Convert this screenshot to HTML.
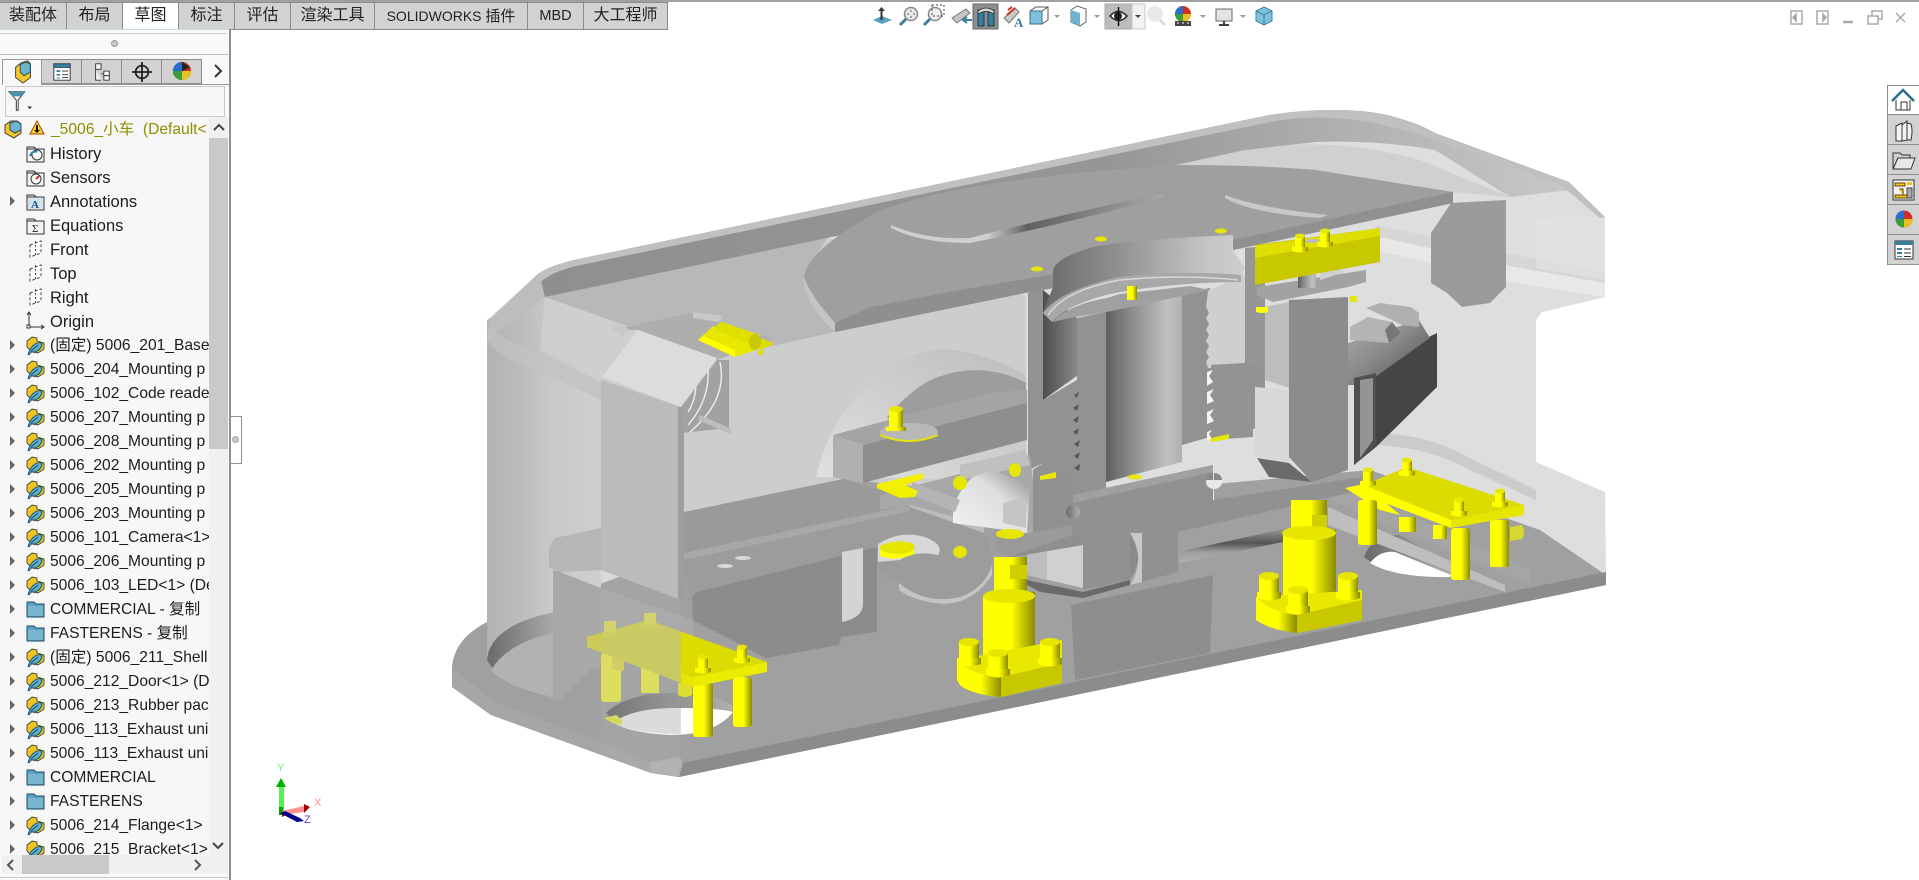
<!DOCTYPE html>
<html><head><meta charset="utf-8"><title>SOLIDWORKS</title>
<style>
html,body{margin:0;padding:0;background:#fff;width:1919px;height:880px;overflow:hidden;font-family:"Liberation Sans","Noto Sans CJK SC",sans-serif}
#topline{position:absolute;left:0;top:0;width:1919px;height:2px;background:#a0a0a0}
.tab{position:absolute;top:2px;height:26px;background:#d2d2d2;border:1px solid #8c8c8c;border-left:0;box-sizing:content-box;font-size:16px;line-height:26px;text-align:center;color:#222;font-family:"Liberation Sans","Noto Sans CJK SC",sans-serif;white-space:nowrap}
.tab.on{background:#fff;border-bottom:1px solid #fff}
#panel{position:absolute;left:0;top:29px;width:229px;height:851px;background:#f9f9f9;border-right:2px solid #8f8f8f;overflow:hidden}
#tree{position:absolute;left:0;top:117px;width:209px;height:738px;background:#f7f7f7;overflow:hidden}
.r{position:absolute;left:0;width:209px;height:24px;font-size:15.6px;line-height:24px;color:#1c1c1c;white-space:nowrap;overflow:hidden}
.r span{position:absolute;left:50px;top:1px}
.r.w{font-size:16.5px}
.r svg{position:absolute;left:26px;top:2px}
.r i{position:absolute;left:10px;top:7px;width:0;height:0;border-left:5px solid #666;border-top:5px solid transparent;border-bottom:5px solid transparent}
svg{display:block}
.abs{position:absolute}
</style></head><body>

<div id="topline"></div>
<div class="tab" style="left:0;width:66px">装配体</div>
<div class="tab" style="left:67px;width:55px">布局</div>
<div class="tab on" style="left:123px;width:55px">草图</div>
<div class="tab" style="left:179px;width:55px">标注</div>
<div class="tab" style="left:235px;width:55px">评估</div>
<div class="tab" style="left:291px;width:83px">渲染工具</div>
<div class="tab" style="left:375px;width:152px;font-size:14px">SOLIDWORKS <span style="font-size:15px">插件</span></div>
<div class="tab" style="left:528px;width:55px;font-size:14.5px">MBD</div>
<div class="tab" style="left:584px;width:83px">大工程师</div>

<!-- 3D MODEL -->
<svg class="abs" style="left:0;top:0" width="1919" height="880" viewBox="0 0 1919 880">
<defs>
<linearGradient id="gShaft" x1="0" x2="1" y1="0" y2="0"><stop offset="0" stop-color="#5f5f5f"/><stop offset=".35" stop-color="#8e8e8e"/><stop offset=".8" stop-color="#c0c0c0"/><stop offset="1" stop-color="#b0b0b0"/></linearGradient>
<linearGradient id="gRing" x1="0" x2="1" y1="0" y2="0"><stop offset="0" stop-color="#6a6a6a"/><stop offset=".35" stop-color="#8e8e8e"/><stop offset=".8" stop-color="#c4c4c4"/><stop offset="1" stop-color="#cfcfcf"/></linearGradient>
<linearGradient id="gHole" x1="0" x2="1" y1="0" y2="0"><stop offset="0" stop-color="#4e4e4e"/><stop offset="1" stop-color="#8e8e8e"/></linearGradient>
<linearGradient id="gShell" x1="0" x2="1" y1="0" y2="0"><stop offset="0" stop-color="#b2b2b2"/><stop offset=".3" stop-color="#bcbcbc"/><stop offset=".55" stop-color="#c9c9c9"/><stop offset="1" stop-color="#cfcfcf"/></linearGradient>
<linearGradient id="gY" x1="0" x2="1" y1="0" y2="0"><stop offset="0" stop-color="#ffff00"/><stop offset=".55" stop-color="#ffff00"/><stop offset="1" stop-color="#8a8a00"/></linearGradient>
<linearGradient id="gDisc" x1="0" x2="1" y1="1" y2="0"><stop offset="0" stop-color="#e0e0e0"/><stop offset="1" stop-color="#bcbcbc"/></linearGradient>
<linearGradient id="gMotor" x1="0" x2="1" y1="1" y2="0"><stop offset="0" stop-color="#f2f2f2"/><stop offset=".6" stop-color="#dedede"/><stop offset="1" stop-color="#8a8a8a"/></linearGradient>
<linearGradient id="gRod" x1="0" x2="0" y1="0" y2="1"><stop offset="0" stop-color="#a0a0a0"/><stop offset=".45" stop-color="#555"/><stop offset=".7" stop-color="#a0a0a0"/><stop offset="1" stop-color="#b0b0b0"/></linearGradient>
<linearGradient id="gBH" x1="0" x2="1" y1="0" y2="0"><stop offset="0" stop-color="#6a6a6a"/><stop offset="1" stop-color="#b0b0b0"/></linearGradient>
<linearGradient id="gBand" x1="0" x2="1" y1="0" y2="0"><stop offset="0" stop-color="#8f8f8f"/><stop offset=".55" stop-color="#969696"/><stop offset=".8" stop-color="#b2b2b2"/><stop offset="1" stop-color="#c8c8c8"/></linearGradient>
<linearGradient id="gSlot" x1="0" x2="1" y1="0" y2="0"><stop offset="0" stop-color="#d0d0d0"/><stop offset=".35" stop-color="#d0d0d0"/><stop offset=".5" stop-color="#606060"/><stop offset="1" stop-color="#a8a8a8"/></linearGradient>
<linearGradient id="gWedge" x1="0" x2="1" y1="0" y2="1"><stop offset="0" stop-color="#ababab"/><stop offset=".45" stop-color="#8a8a8a"/><stop offset="1" stop-color="#484848"/></linearGradient>
<g id="screw"><rect x="-5" y="-7" width="10" height="12" fill="url(#gY)"/><ellipse cx="0" cy="-7" rx="5" ry="2.400" fill="#e8e800"/><path d="M-8,4 h16 v4 q-8,3 -16,0z" fill="url(#gY)"/></g>
<g id="bigscrew"><path d="M-10,-12 h20 v18 h-20z" fill="url(#gY)"/><ellipse cx="0" cy="-12" rx="10" ry="4" fill="#e6e600"/><path d="M-12,4 h24 v6 q-12,5 -24,0z" fill="url(#gY)"/></g>
</defs>

<!-- shell full silhouette light -->
<path d="M487,320 L539,273 Q552,265 574,260 L1269,115 Q1300,110 1336,110 Q1370,110 1395,117 Q1420,124 1435,133 L1569,182 L1605,217 L1605,297 L1542,312 Q1536,314 1536,320 L1536,462 L1605,492 L1606,585 L1000,710 L679,777 L651,773 L491,715 L452,687 L452,667 Q456,620 543,605 Z" fill="#dedede"/>
<!-- mid wall grey -->
<path d="M545,297 L827,238 L1040,300 L1040,500 L684,515 L684,435 L545,400 Z" fill="#cdcdcd"/>
<path d="M545,297 L827,238 L804,277 L835,332 L717,358 L638,330 Z" fill="#b8b8b8"/>
<!-- right interior light shading -->
<path d="M1176,165 L1245,150 Q1316,142 1380,145 Q1410,148 1435,160 L1510,197 L1575,190 L1605,217 L1605,297 L1542,312 L1536,320 L1536,462 L1440,425 L1240,420 Z" fill="#dedede"/>
<path d="M1176,165 L1245,150 Q1330,135 1420,160 L1510,197 L1453,192 L1316,170Z" fill="#d0d0d0"/>
<path d="M1376,236 L1510,266 L1605,283 L1605,297 L1510,282 L1376,250Z" fill="#e8e8e8"/>
<path d="M1376,225 L1510,254 L1605,272 L1605,283 L1510,266 L1376,236Z" fill="#d6d6d6"/>
<path d="M1536,218 L1605,217 L1605,280 L1536,268Z" fill="#e2e2e2" opacity=".6"/>
<!-- outer top strip + band -->
<path d="M540,282 Q552,265 574,260 L1269,115 Q1300,110 1336,110 Q1370,110 1395,117 Q1420,124 1435,133 L1569,182 L1570,190 L1510,197 L1435,150 Q1380,140 1316,142 L1245,150 L1176,165 L827,238 L545,297 Z" fill="url(#gBand)"/>
<path d="M489,320 L539,273 Q552,265 574,260 L1269,115 Q1336,104 1395,117 L1435,133 L1569,182 L1605,217 L1600,218 L1562,186 L1430,138 Q1340,108 1270,122 L576,266 Q552,272 542,281 L495,325Z" fill="#c0c0c0"/>
<!-- lower right shell -->
<path d="M1395,420 Q1430,425 1470,445 L1605,492 L1606,575 L1534,587 L1328,507 L1340,470Z" fill="#dedede"/>
<path d="M1378,433 Q1430,435 1470,458 L1536,490 L1536,500 L1470,470 Q1430,448 1378,445Z" fill="#cbcbcb"/>
<!-- upper right block -->
<path d="M1431,233 L1451,203 L1506,200 L1506,287 L1490,303 L1462,307 L1447,293 L1431,283Z" fill="#9b9b9b"/>
<!-- big disc -->
<path d="M816,477 Q830,415 880,375 Q920,345 955,350 Q990,355 1025,375 L1040,480 Z" fill="url(#gDisc)"/>
<path d="M887,417 Q915,385 938,377 Q985,360 1030,385 L1030,420 L900,430 Z" fill="#9d9d9d"/>
<!-- base plate -->
<path d="M452,667 Q456,620 543,605 L684,553 L843,479 L1040,500 L1370,470 L1540,530 L1606,575 L1606,585 L679,777 L651,773 L491,715 L452,687Z" fill="#a0a0a0"/>
<path d="M452,667 L452,687 L491,715 L651,773 L651,762 L491,700Z" fill="#a6a6a6"/>
<path d="M683,763 L1606,572 L1606,585 L679,777Z" fill="#8c8c8c"/>
<path d="M651,762 L680,757 L683,763 L679,777 L651,773Z" fill="#b0b0b0"/>
<!-- back slab -->
<path d="M684,512 L843,479 L910,500 L910,507 L684,553Z" fill="#9a9a9a"/>
<!-- translucent left column -->
<path d="M487,320 L545,297 L602,377 L601,570 L601,600 L555,612 Q505,625 487,660Z" fill="url(#gShell)"/>
<path d="M489,320 L539,273 L545,297 L487,340Z" fill="#bdbdbd"/>
<path d="M545,297 L638,330 L602,377 L540,350Z" fill="#cfcfcf"/>
<path d="M487,340 Q495,355 540,372 L601,400 L601,382 L545,355 Q500,340 489,325Z" fill="#c2c2c2" opacity=".7"/>
<!-- left recess in base -->
<path d="M487,660 Q490,625 555,612 L560,700 Q505,690 487,660Z" fill="url(#gBH)"/>
<path d="M491,670 Q510,640 560,632 L560,698 Q510,690 491,670Z" fill="#b2b2b2"/>
<!-- bracket -->
<path d="M549,547 L555,538 L684,510 L684,553 L601,570 L560,572 L549,567Z" fill="#b6b6b6"/>
<path d="M560,572 L601,588 L693,620 L693,650 L640,660 L590,670 L560,700 L553,698 L553,570Z" fill="#a8a8a8"/>
<path d="M684,553 L910,507 L984,533 L990,540 L992,573 Q970,600 946,600 Q915,600 899,583 L877,570 L877,632 L841,637 L839,643 L766,658 L693,618 L692,597 L684,575Z" fill="#9c9c9c"/>
<path d="M692,597 L697,592 L877,547 L877,632 L841,637 L839,645 L766,658 L693,620Z" fill="#8c8c8c"/>
<path d="M842,552 L863,548 L863,605 Q862,618 842,622Z" fill="#d4d4d4"/>
<path d="M910,500 L984,523 L984,533 L910,507Z" fill="#bcbcbc"/>
<path d="M684,553 L910,505 L910,511 L684,560Z" fill="#a8a8a8"/>
<ellipse cx="725" cy="566" rx="8" ry="2" fill="#d8d8d8"/><ellipse cx="743" cy="558" rx="8" ry="2" fill="#d8d8d8"/>
<path d="M878,544 Q900,530 925,537 Q945,545 938,555 Q915,550 900,560 L878,562Z" fill="#d8d8d8"/>
<path d="M899,583 Q925,605 960,597 Q985,588 992,565 L992,575 Q975,602 945,604 Q915,602 899,590Z" fill="#c4c4c4"/>
<!-- block on base -->
<path d="M1071,605 L1213,575 L1210,653 L1075,680Z" fill="#8e8e8e"/>
<!-- holes in base right -->
<path d="M1364,557 Q1372,535 1400,535 L1451,565 L1451,577 Q1390,578 1364,557Z" fill="url(#gBH)"/>
<path d="M1370,563 Q1380,550 1395,552 L1451,575 L1450,577 Q1395,578 1370,563Z" fill="#fff"/>
<path d="M1328,507 L1505,585 L1505,592 L1328,525Z" fill="#bebebe"/>
<path d="M1330,480 L1530,570 L1530,585 L1330,500Z" fill="#a8a8a8" opacity=".6"/>
<!-- left hole -->
<path d="M606,713 Q625,695 665,693 Q720,693 733,707 Q730,730 670,735 Q625,733 606,713Z" fill="url(#gBH)"/>
<path d="M614,723 Q630,708 680,708 Q720,708 733,712 Q715,735 670,735 Q630,733 614,723Z" fill="#fff"/>
<path d="M614,723 Q630,708 681,708 L681,734 Q630,733 614,723Z" fill="#e0e0e0"/>
<!-- fan wall top -->
<path d="M612,330 L697,312 L729,328 L773,338 L717,360 L638,330Z" fill="#aeaeae"/>
<path d="M612,328 l8,-4 l10,6 l-8,6z M693,312 l30,4 l-4,6 l-26,-4z" fill="#c8c8c8"/>
<!-- fan recess -->
<path d="M717,360 L681,407 L681,433 L729,428 L729,360Z" fill="#a2a2a2"/>
<path d="M720,362 Q728,400 690,432 M708,368 Q710,400 688,425 M696,382 Q696,400 688,412" fill="none" stroke="#eee" stroke-width="1.400"/>
<path d="M700,415 l32,14 l-2,5 l-32,-14z" fill="#bdbdbd"/>
<!-- door slant and front -->
<path d="M638,330 L717,358 L681,407 L602,377Z" fill="#dcdcdc"/>
<path d="M601,380 L681,407 L681,600 L601,570Z" fill="#bbbbbb"/>
<path d="M684,435 l-3,-28 l-3,0 l0,193 l6,2z" fill="#9e9e9e"/>
<!-- top plate -->
<path d="M804,277 Q808,250 875,213 Q950,180 1176,165 Q1260,165 1316,170 L1453,192 L1453,203 L1233,250 L1060,287 L1025,293 L835,332 L835,323 Q810,300 804,277Z" fill="#9f9f9f"/>
<path d="M804,277 Q810,295 835,323 L835,332 Q812,312 804,287Z" fill="#c4c4c4"/>
<path d="M835,323 L871,307 L960,290 L1060,273 L1060,287 L1025,293 L835,332Z" fill="#8f8f8f"/>
<path d="M1233,240 L1453,192 L1453,203 L1233,250Z" fill="#909090"/>
<path d="M891,228 Q920,243 970,243 Q1060,225 1164,197 L1160,194 Q1060,215 970,238 Q925,240 891,225Z" fill="url(#gSlot)"/>
<path d="M1225,195 Q1260,208 1328,215 L1320,218 Q1250,213 1225,198Z" fill="#c8c8c8"/>
<ellipse cx="1037" cy="269" rx="6" ry="2.500" fill="#e6e600"/><ellipse cx="1101" cy="239" rx="6" ry="2.500" fill="#e6e600"/><ellipse cx="1221" cy="231" rx="6" ry="2.500" fill="#e6e600"/>
<!-- central machine: thin light left -->
<rect x="1026" y="293" width="4" height="180" fill="#dcdcdc"/>
<path d="M1028,293 L1043,288 L1043,463 L1028,470Z" fill="#929292"/>
<!-- beam -->
<path d="M833,435 L863,445 L1027,403 L1027,390 L990,393 L870,425Z" fill="#a4a4a4"/>
<path d="M833,435 L863,445 L863,483 L833,477Z" fill="#b0b0b0"/>
<path d="M863,445 L1027,403 L1027,440 L863,483Z" fill="#8e8e8e"/>
<!-- space between beam and slab -->
<path d="M880,495 L1030,455 L1040,540 L910,505 L880,510Z" fill="#a8a8a8"/>
<path d="M960,465 L1025,450 L1030,465 L960,480Z" fill="#c0c0c0"/>
<!-- motor -->
<path d="M953,510 Q958,490 973,477 L993,470 L1030,485 L1027,533 L953,523Z" fill="url(#gMotor)"/>
<path d="M1003,503 L1026,497 L1026,528 L1003,523Z" fill="#c4c4c4"/>
<path d="M912,482 L960,500 L955,512 L912,495 Z" fill="#b4b4b4"/>
<!-- hole ring and cavity -->
<path d="M1043,290 L1077,318 L1081,373 L1043,400Z" fill="url(#gHole)"/>
<path d="M1043,400 L1077,380 L1106,380 L1106,490 L1033,505 L1033,470 L1043,463Z" fill="#929292"/>
<path d="M1077,318 L1106,312 L1106,400 L1077,400Z" fill="#929292"/>
<!-- shaft -->
<path d="M1106,312 L1182,293 L1182,462 L1106,482Z" fill="url(#gShaft)"/>
<path d="M1182,293 L1210,288 L1210,437 L1182,445Z" fill="#929292"/>
<path d="M1210,290 L1245,275 L1245,363 L1209,367Z" fill="#cfcfcf"/>
<path d="M1245,248 L1265,246 L1265,430 L1245,428Z" fill="#969696"/>
<path d="M1208,365 L1245,363 L1263,367 L1265,427 L1253,428 L1253,437 L1210,440Z" fill="#939393"/>
<!-- teeth -->
<g fill="#cfcfcf"><path d="M1208,291 l3,-3 v80 h-3 l-2,-6 3,-5 -3,-5 3,-6 -3,-5 3,-6 -3,-5 3,-6 -3,-6 3,-5 -3,-6z"/></g>
<g fill="#f4f4f4"><path d="M1207,372 l6,-2 -4,6 4,6 -6,4z M1207,392 l7,-3 -4,6 4,6 -7,3z M1207,412 l7,-3 -4,6 4,6 -7,3z M1207,432 l5,-2 -3,4 3,5 -5,2z"/></g>
<g fill="#555"><path d="M1074,395 l5,-3 -2,6z M1073,408 l6,-4 -2,7z M1073,420 l6,-4 -2,7z M1073,432 l6,-4 -2,7z M1074,444 l6,-4 -2,7z M1074,456 l6,-4 -2,7z M1074,468 l6,-4 -1,7z"/></g>
<!-- ring over -->
<path d="M1053,287 L1053,270 Q1056,258 1090,248 Q1119,240 1233,235 L1233,250 Q1238,260 1245,267 L1241,282 Q1180,275 1119,280 Q1070,290 1050,320 L1043,313Z" fill="url(#gRing)"/>
<path d="M1043,313 Q1060,290 1119,277 Q1180,270 1241,275 L1241,282 Q1180,282 1120,292 Q1070,302 1052,322Z" fill="#a8a8a8"/>
<path d="M1052,322 Q1070,304 1107,298 L1120,294 L1190,286 L1210,290 L1107,312 L1070,318Z" fill="#a0a0a0"/>
<path d="M1048,315 Q1065,290 1120,280 Q1180,274 1238,280" fill="none" stroke="#d8d8d8" stroke-width="1.500"/>
<!-- central lower section -->
<path d="M1027,553 L1083,545 L1083,588 L1027,575Z" fill="#d0d0d0"/>
<path d="M1027,553 L1047,550 L1047,580 L1027,575Z" fill="#bdbdbd"/>
<path d="M1027,580 L1083,592 L1130,580 L1130,585 L1083,598 L1040,592 L1027,585Z" fill="#6a6a6a"/>
<path d="M1178,552 L1293,527 L1293,540 L1180,563Z" fill="url(#gRod)"/>
<path d="M1033,480 L1073,470 L1073,495 L1213,465 L1213,500 L1362,477 L1362,490 L1178,532 L1178,572 L1142,582 L1142,533 L1130,533 L1130,580 L1083,590 L1083,545 L1072,530 L1033,540Z" fill="#919191"/>
<path d="M1073,495 L1213,465 L1213,472 L1073,503Z" fill="#a0a0a0"/>
<path d="M1130,533 L1142,533 L1142,582 L1130,585 Q1146,560 1130,533Z" fill="#c8c8c8"/>
<path d="M1130,533 Q1146,560 1130,578 Z" fill="#8a8a8a"/>
<!-- bullet -->
<ellipse cx="1214" cy="482" rx="8" ry="7" fill="#e8e8e8"/><path d="M1206,480 a8,7 0 0 1 16,0z" fill="#888"/>
<rect x="1213" y="462" width="1" height="38" fill="#e8e8e8"/>
<ellipse cx="1073" cy="512" rx="7" ry="7" fill="url(#gBH)"/>
<!-- plate left low -->
<path d="M995,537 L1072,529 L1072,535 L1008,558 L995,548Z" fill="#9b9b9b"/>
<path d="M1008,547 L1072,530 L1083,545 L1008,558Z" fill="#8f8f8f"/>
<!-- right cylinder and body -->
<path d="M1265,307 L1289,302 L1289,388 L1265,380Z" fill="#bdbdbd"/>
<path d="M1255,387 L1289,390 L1289,462 L1255,457Z" fill="#d8d8d8"/>
<path d="M1257,458 L1289,463 L1312,482 L1269,477Z" fill="#6a6a6a"/>
<!-- dark rail -->
<path d="M1354,373 L1437,333 L1437,387 L1376,447 L1354,465Z" fill="#454545"/>
<path d="M1348,343 L1419,320 L1425,330 L1430,338 L1364,385 L1348,385Z" fill="url(#gWedge)"/>
<path d="M1350,327 L1368,317 L1392,322 L1401,333 L1389,343 L1350,340Z" fill="#b4b4b4"/>
<path d="M1392,322 L1401,333 L1389,343 L1385,330Z" fill="#777"/>
<path d="M1366,308 L1380,303 L1411,307 L1419,313 L1419,327 L1402,325 L1392,320Z" fill="#b0b0b0"/>
<path d="M1354,378 L1376,373 L1376,445 L1354,465Z" fill="#505050"/>
<path d="M1360,380 L1373,378 L1373,440 L1360,458Z" fill="#949494"/>
<!-- big grey body -->
<path d="M1289,300 L1348,297 L1348,470 L1312,482 L1289,457Z" fill="#8c8c8c"/>
<path d="M1257,287 L1366,270 L1366,282 L1348,287 L1273,302 L1257,295Z" fill="#a2a2a2"/>
<!-- small stud -->
<rect x="1298" y="274" width="18" height="14" fill="url(#gShaft)"/>
<path d="M1320,272 Q1335,262 1345,272 L1320,280Z" fill="#d0d0d0"/>
<!-- yellow block -->
<path d="M1255,245 L1380,228 L1380,262 L1255,285Z" fill="#c8c800"/>
<path d="M1255,246 L1380,228 L1380,236 L1255,258Z" fill="#dede00"/>
<use href="#screw" x="1300" y="243"/><use href="#screw" x="1325" y="238"/>
<ellipse cx="1312" cy="241" rx="7" ry="2" fill="#bcbcbc"/>
<!-- small yellow details -->
<g transform="translate(1132,293)"><rect x="-5" y="-7" width="10" height="14" fill="url(#gY)"/></g>
<path d="M1256,307 h12 v5 q-6,2 -12,0z" fill="#ffff00"/>
<rect x="1350" y="296" width="7" height="6" fill="#e6e600"/>
<path d="M1211,438 l18,-4 v5 l-18,3z" fill="#e8e800"/>
<path d="M1040,476 l16,-4 v6 l-16,2z" fill="#e8e800"/>
<ellipse cx="1135" cy="477" rx="7" ry="2.500" fill="#e8e800"/>
<ellipse cx="1015" cy="470" rx="6" ry="7" fill="#e6e600"/>
<ellipse cx="960" cy="483" rx="7" ry="7" fill="#e6e600"/>
<!-- screw on beam -->
<path d="M880,433 q0,-10 29,-10 q29,0 29,10 q-8,8 -29,8 q-21,0 -29,-8z" fill="#b8b8b8"/>
<path d="M880,434 q29,12 58,0 v2 q-29,12 -58,0z" fill="#e6e600"/>
<g transform="translate(889,425)"><rect x="0" y="-16" width="14" height="18" fill="url(#gY)"/><ellipse cx="7" cy="-16" rx="7" ry="3" fill="#e6e600"/><path d="M-3,2 h20 v4 h-20z" fill="url(#gY)"/></g>
<!-- yellow T bracket -->
<path d="M877,484 L923,473 L923,479 L905,485 L918,491 L915,497 L900,498 L877,488Z" fill="#f0f000"/>
<!-- lower yellow -->
<path d="M880,546 Q897,538 914,544 L914,553 Q897,560 880,554Z" fill="#e6e600"/>
<path d="M880,550 Q897,558 914,550 L914,554 Q897,562 880,556Z" fill="#ffff00"/>
<ellipse cx="960" cy="552" rx="7" ry="6" fill="#e6e600"/>
<!-- pillar 1 -->
<path d="M995,540 L1072,525 L1072,535 L1005,558 L995,548Z" fill="#9a9a9a"/>
<ellipse cx="1010" cy="534" rx="14" ry="5" fill="#e6e600"/>
<rect x="994" y="557" width="33" height="46" fill="url(#gY)"/>
<rect x="1010" y="565" width="17" height="14" fill="#cfcf00"/>
<path d="M983,597 Q1009,590 1035,592 L1035,655 L983,665Z" fill="url(#gY)"/>
<ellipse cx="1009" cy="596" rx="26" ry="7" fill="#e6e600"/>
<path d="M957,660 L1062,640 L1062,663 L1001,697 Q975,695 962,687 L957,680Z" fill="#e8e800"/>
<path d="M1001,677 L1062,663 L1062,683 L1001,697Z" fill="#c8c800"/>
<path d="M957,660 Q970,675 1001,677 L1001,697 Q975,695 960,685 L957,680Z" fill="url(#gY)"/>
<use href="#bigscrew" x="969" y="654"/><use href="#bigscrew" x="998" y="665"/><use href="#bigscrew" x="1050" y="654"/>
<!-- pillar 2 -->
<rect x="1291" y="500" width="36" height="38" fill="url(#gY)"/>
<rect x="1312" y="515" width="15" height="16" fill="#cfcf00"/>
<path d="M1283,533 Q1310,522 1336,530 L1336,593 L1283,603Z" fill="url(#gY)"/>
<ellipse cx="1309" cy="533" rx="27" ry="7" fill="#e6e600"/>
<path d="M1256,597 L1362,590 L1362,620 L1297,633 Q1272,630 1256,620Z" fill="#e8e800"/>
<path d="M1297,615 L1362,600 L1362,620 L1297,633Z" fill="#c8c800"/>
<path d="M1256,597 Q1270,612 1297,615 L1297,633 Q1270,630 1256,620Z" fill="url(#gY)"/>
<use href="#bigscrew" x="1269" y="588"/><use href="#bigscrew" x="1298" y="602"/><use href="#bigscrew" x="1348" y="588"/>
<!-- right plate -->
<path d="M1345,488 L1364,484 L1400,515 L1380,510Z" fill="#ffff00"/>
<rect x="1358" y="500" width="19" height="45" rx="3" fill="url(#gY)"/>
<rect x="1399" y="517" width="17" height="15" fill="url(#gY)"/>
<rect x="1433" y="525" width="14" height="14" fill="url(#gY)"/>
<rect x="1451" y="528" width="19" height="52" rx="3" fill="url(#gY)"/>
<rect x="1490" y="520" width="19" height="47" rx="2" fill="url(#gY)"/>
<path d="M1510,527 l12,-2 q4,8 0,14 l-12,2z" fill="#d8d830"/>
<path d="M1364,485 L1407,467 L1524,505 L1451,520Z" fill="#dcdc00"/>
<path d="M1364,485 L1451,520 L1451,528 L1364,495Z" fill="#ffff00"/>
<path d="M1451,520 L1524,505 L1524,515 L1451,528Z" fill="#e6e600"/>
<use href="#screw" x="1368" y="477"/><use href="#screw" x="1407" y="467"/><use href="#screw" x="1459" y="507"/><use href="#screw" x="1500" y="498"/>
<!-- left plate -->
<rect x="693" y="683" width="20" height="54" rx="3" fill="url(#gY)"/>
<rect x="733" y="677" width="19" height="50" rx="3" fill="url(#gY)"/>
<rect x="601" y="653" width="20" height="49" rx="3" fill="#e2e250"/>
<rect x="641" y="667" width="18" height="26" fill="#e2e250"/>
<path d="M678,683 h14 v12 q-7,4 -14,0z" fill="#dede30"/>
<path d="M612,657 l12,2 v12 l-12,-2z" fill="#d2d255"/>
<path d="M587,637 L648,620 L767,662 L693,677Z" fill="#dcdc00"/>
<path d="M587,637 L693,677 L693,687 L587,647Z" fill="#e6e600"/>
<path d="M693,677 L767,662 L767,672 L693,687Z" fill="#ecec00"/>
<path d="M587,637 L648,620 L681,632 L681,683 L587,647Z" fill="#cccc55"/>
<g opacity=".95"><use href="#screw" x="703" y="664"/><use href="#screw" x="742" y="654"/></g>
<g transform="translate(610,628)"><rect x="-6" y="-7" width="12" height="12" fill="#d8d860"/><path d="M-8,4 h16 v4 q-8,3 -16,0z" fill="#d0d055"/></g>
<g transform="translate(650,620)"><rect x="-6" y="-7" width="12" height="12" fill="#d8d860"/><path d="M-8,4 h16 v4 q-8,3 -16,0z" fill="#d0d055"/></g>
<path d="M601,570 L601,755 L651,773 L679,777 L681,600Z" fill="#c0c0c0" opacity=".14"/>
<path d="M604,718 l12,-3 l6,5 l0,5 l-10,-2z" fill="#d8d860"/>
<!-- hinge -->
<g transform="translate(0,2)">
<path d="M698,338 L713,324 L774,342 L735,355Z" fill="#e8e800"/>
<path d="M698,338 L735,355 L735,348 L703,334Z" fill="#ffff00"/>
<path d="M715,328 Q716,322 722,320 L760,333 L757,345Z" fill="#e0e000"/>
<ellipse cx="755" cy="340" rx="6" ry="8" fill="#c8c800"/>
<path d="M762,336 l12,6 l-14,6z" fill="#dcdc00"/>
<rect x="758" y="348" width="5" height="5" fill="#e0e000"/>
</g>
<!-- triad -->
<rect x="279" y="786" width="5" height="26" fill="#55f055"/>
<path d="M281,778 l5,9 h-10z" fill="#00b000"/>
<rect x="279" y="807" width="4" height="8" fill="#00a000"/>
<path d="M282,811 L304,806 L304,812 L284,815Z" fill="#ff9090"/>
<path d="M304,804 l6,3 -6,6z" fill="#a00000"/>
<path d="M282,813 h8 l-8,4z" fill="#a00000"/>
<path d="M280,813 L297,822 L304,821 L300,818 L285,811Z" fill="#00008c"/>
<text x="277" y="771" font-size="11" fill="#70f070" font-family="Liberation Sans">Y</text>
<text x="314" y="806" font-size="11" fill="#ff9090" font-family="Liberation Sans">X</text>
<text x="304" y="823" font-size="11" fill="#5050e0" font-family="Liberation Sans">Z</text>
</svg>

<!-- PANEL -->
<div id="panel">
  <div class="abs" style="left:0;top:0;width:229px;height:1px;background:#c3dcdc"></div>
  <div class="abs" style="left:0;top:4px;width:227px;height:1px;background:#cfcfcf"></div>
  <div class="abs" style="left:111px;top:11px;width:7px;height:7px;border-radius:50%;background:#c8c8c8;border:1px solid #999;box-sizing:border-box"></div>
  <div class="abs" style="left:0;top:25px;width:228px;height:1px;background:#bcbcbc"></div>
  <div class="abs" style="left:2px;top:30px;width:40px;height:26px;background:#f8f8f8;border:1px solid #999;border-bottom:0;box-sizing:border-box"></div>
  <div class="abs" style="left:42px;top:30px;width:40px;height:25px;background:#d2d2d2;border:1px solid #8c8c8c;border-left:0;box-sizing:border-box"></div>
  <div class="abs" style="left:82px;top:30px;width:40px;height:25px;background:#d2d2d2;border:1px solid #8c8c8c;border-left:0;box-sizing:border-box"></div>
  <div class="abs" style="left:122px;top:30px;width:40px;height:25px;background:#d2d2d2;border:1px solid #8c8c8c;border-left:0;box-sizing:border-box"></div>
  <div class="abs" style="left:162px;top:30px;width:40px;height:25px;background:#d2d2d2;border:1px solid #8c8c8c;border-left:0;box-sizing:border-box"></div>
  <div class="abs" style="left:42px;top:55px;width:187px;height:1px;background:#999"></div>
  <div class="abs" style="left:5px;top:57px;width:220px;height:31px;background:#f7f7f7;border:1px solid #c8c8c8;box-sizing:border-box"></div>
  <svg class="abs" style="left:13px;top:31px" width="20" height="24" viewBox="0 0 20 26"><path d="M2,8 L8,3 L15,1 L18,4 L18,19 L10,25 L2,19Z" fill="#f4c628" stroke="#3c3c3c"/><path d="M7,5 L14,2 L18,5 L18,13 L11,17 L7,13Z" fill="#6fb4cf" stroke="#264a5a"/></svg>
  <svg class="abs" style="left:52px;top:33px" width="20" height="20" viewBox="0 0 22 22"><rect x="2" y="2" width="18" height="18" fill="#fff" stroke="#333"/><rect x="2" y="2" width="18" height="4" fill="#3a7ea0" stroke="#264a5a"/><path d="M5,9h4v2H5zM5,13h4v2H5zM5,17h4v1H5z" fill="#3a7ea0"/><path d="M11,10h7M11,14h7M11,17h7" stroke="#333"/></svg>
  <svg class="abs" style="left:92px;top:33px" width="20" height="20" viewBox="0 0 22 22" fill="none" stroke="#333"><path d="M4,2h6v6H4z M4,8v12 h6 M10,13h3 M13,10h6v5h-6z M13,15h6v5h-6z" fill="#f4f4f4"/></svg>
  <svg class="abs" style="left:132px;top:33px" width="20" height="20" viewBox="0 0 22 22" fill="none" stroke="#222" stroke-width="2"><circle cx="11" cy="11" r="7"/><path d="M11,0v22M0,11h22"/></svg>
  <svg class="abs" style="left:172px;top:31px" width="20" height="22" viewBox="0 0 22 24"><circle cx="11" cy="12" r="10" fill="#d03020"/><path d="M11,12 L11,22 A10,10 0 0 1 1,12Z" fill="#3a9c3a"/><path d="M11,12 L1,12 A10,10 0 0 1 11,2Z" fill="#2a6fd0"/><path d="M11,12 L21,12 A10,10 0 0 1 11,22Z" fill="#e8c020"/><path d="M11,12 L11,2 L20,8Z" fill="#222"/></svg>
  <svg class="abs" style="left:212px;top:34px" width="12" height="16" viewBox="0 0 12 16" fill="none" stroke="#333" stroke-width="2"><path d="M3,2 L9,8 L3,14"/></svg>
  <svg class="abs" style="left:8px;top:60px" width="24" height="24" viewBox="0 0 26 26"><path d="M1,3 H18 L11,12 V23 L9,23 V12Z" fill="#fff" stroke="#333"/><path d="M1,3 H18 L14,8 H5Z" fill="#4a93b3"/><path d="M21,19h5l-2.500,3z" fill="#333"/></svg>
  <div class="abs" style="left:209px;top:88px;width:19px;height:738px;background:#f0f0f0"></div>
  <div class="abs" style="left:209px;top:109px;width:19px;height:311px;background:#c9c9c9"></div>
  <svg class="abs" style="left:212px;top:93px" width="14" height="10" viewBox="0 0 14 10" fill="none" stroke="#444" stroke-width="2"><path d="M2,8 L7,3 L12,8"/></svg>
  <svg class="abs" style="left:211px;top:812px" width="14" height="10" viewBox="0 0 14 10" fill="none" stroke="#444" stroke-width="2"><path d="M2,2 L7,7 L12,2"/></svg>
  <div class="abs" style="left:2px;top:826px;width:226px;height:19px;background:#f0f0f0"></div>
  <div class="abs" style="left:22px;top:826px;width:87px;height:19px;background:#c9c9c9"></div>
  <svg class="abs" style="left:5px;top:829px" width="10" height="14" viewBox="0 0 10 14" fill="none" stroke="#555" stroke-width="2"><path d="M8,2 L3,7 L8,12"/></svg>
  <svg class="abs" style="left:193px;top:829px" width="10" height="14" viewBox="0 0 10 14" fill="none" stroke="#555" stroke-width="2"><path d="M2,2 L7,7 L2,12"/></svg>
  <div class="abs" style="left:0;top:848px;width:228px;height:1px;background:#c8c8c8"></div>
</div>

<svg width="0" height="0" style="position:absolute">
<symbol id="prt" viewBox="0 0 20 20"><path d="M1,6 L6,2 L11,3 L11,6 L18,8 L18,14 L12,18 L6,17 L1,12Z" fill="#f0c420" stroke="#444" stroke-width=".9"/><path d="M2,20 Q4,11 11,8 Q15,7 16,9 Q15,15 9,17 L5,17 L3,20Z" fill="#5fb0cf" stroke="#164a60" stroke-width=".9"/><path d="M5,16 L12,10" stroke="#164a60"/></symbol>
<symbol id="fld" viewBox="0 0 20 20"><path d="M1,5 L1,3 H8 L10,5 H18 V18 H1Z" fill="#5fa0bf" stroke="#1d4f66"/><rect x="2" y="7" width="15" height="10" fill="#79b6d0"/></symbol>
<symbol id="pl" viewBox="0 0 20 20" ><path d="M4,6 L15,2 V14 L4,18Z" fill="#fff" stroke="#444" stroke-dasharray="3 2"/><path d="M9.500,2 V18" stroke="#444" stroke-dasharray="2 2"/></symbol>
<symbol id="sf" viewBox="0 0 20 20"><path d="M1,4 L8,4 L10,6 H18 V19 H1Z" fill="#f4f4f4" stroke="#333"/><path d="M1,6 H18" stroke="#333"/></symbol>
</svg>

<div id="tree" style="top:117px;left:0;position:absolute">
<div class="r" style="top:0"><svg style="left:4px" width="20" height="20" viewBox="0 0 20 20"><path d="M1,6 L7,2 L13,2 L17,5 L17,14 L10,19 L1,14Z" fill="#f4c628" stroke="#3c3c3c"/><path d="M6,4 L12,2 L17,5 L17,11 L11,14 L6,11Z" fill="#6fb4cf" stroke="#264a5a"/></svg><svg style="left:29px" width="16" height="18" viewBox="0 0 16 16"><path d="M8,1 L15,14 H1Z" fill="#f8d430" stroke="#b04000"/><path d="M7,5h2v5h2l-3,3-3-3h2z" fill="#111"/></svg><span style="left:51px;color:#8f8f00">_5006_小车&nbsp; (Default&lt;</span></div>
<div class="r w" style="top:24px"><svg width="20" height="20"><use href="#sf"/><circle cx="11" cy="12" r="5" fill="#fff" stroke="#333"/><path d="M4,13 q3,-6 7,-4" fill="none" stroke="#2a7ea0" stroke-width="2"/></svg><span>History</span></div>
<div class="r w" style="top:48px"><svg width="20" height="20"><use href="#sf"/><circle cx="10" cy="12" r="5" fill="#fff" stroke="#333"/><path d="M10,12 l3,-3" stroke="#d03020" stroke-width="2"/></svg><span>Sensors</span></div>
<div class="r w" style="top:72px"><i></i><svg width="20" height="20"><use href="#sf"/><rect x="2" y="7" width="15" height="11" fill="#cfe4ee"/><text x="5" y="17" font-size="11" font-weight="700" font-family="Liberation Serif" fill="#1d4f86">A</text></svg><span>Annotations</span></div>
<div class="r w" style="top:96px"><svg width="20" height="20"><use href="#sf"/><text x="6" y="17" font-size="11" font-family="Liberation Serif" fill="#222">Σ</text></svg><span>Equations</span></div>
<div class="r w" style="top:120px"><svg width="20" height="20"><use href="#pl"/></svg><span>Front</span></div>
<div class="r w" style="top:144px"><svg width="20" height="20"><use href="#pl"/></svg><span>Top</span></div>
<div class="r w" style="top:168px"><svg width="20" height="20"><use href="#pl"/></svg><span>Right</span></div>
<div class="r w" style="top:192px"><svg width="20" height="20" viewBox="0 0 20 20" fill="none" stroke="#333"><path d="M3,2 V16 H17 M1,4 L3,1 5,4 M15,14 L18,16 15,18"/><rect x="1" y="14" width="3" height="3" fill="#fff"/></svg><span>Origin</span></div>
<div class="r" style="top:216px"><i></i><svg width="20" height="20"><use href="#prt"/></svg><span>(固定) 5006_201_Base</span></div>
<div class="r" style="top:240px"><i></i><svg width="20" height="20"><use href="#prt"/></svg><span>5006_204_Mounting p</span></div>
<div class="r" style="top:264px"><i></i><svg width="20" height="20"><use href="#prt"/></svg><span>5006_102_Code reader</span></div>
<div class="r" style="top:288px"><i></i><svg width="20" height="20"><use href="#prt"/></svg><span>5006_207_Mounting p</span></div>
<div class="r" style="top:312px"><i></i><svg width="20" height="20"><use href="#prt"/></svg><span>5006_208_Mounting p</span></div>
<div class="r" style="top:336px"><i></i><svg width="20" height="20"><use href="#prt"/></svg><span>5006_202_Mounting p</span></div>
<div class="r" style="top:360px"><i></i><svg width="20" height="20"><use href="#prt"/></svg><span>5006_205_Mounting p</span></div>
<div class="r" style="top:384px"><i></i><svg width="20" height="20"><use href="#prt"/></svg><span>5006_203_Mounting p</span></div>
<div class="r" style="top:408px"><i></i><svg width="20" height="20"><use href="#prt"/></svg><span>5006_101_Camera&lt;1&gt;</span></div>
<div class="r" style="top:432px"><i></i><svg width="20" height="20"><use href="#prt"/></svg><span>5006_206_Mounting p</span></div>
<div class="r" style="top:456px"><i></i><svg width="20" height="20"><use href="#prt"/></svg><span>5006_103_LED&lt;1&gt; (De</span></div>
<div class="r" style="top:480px"><i></i><svg width="20" height="20"><use href="#fld"/></svg><span>COMMERCIAL - 复制</span></div>
<div class="r" style="top:504px"><i></i><svg width="20" height="20"><use href="#fld"/></svg><span>FASTERENS - 复制</span></div>
<div class="r" style="top:528px"><i></i><svg width="20" height="20"><use href="#prt"/></svg><span>(固定) 5006_211_Shell</span></div>
<div class="r" style="top:552px"><i></i><svg width="20" height="20"><use href="#prt"/></svg><span>5006_212_Door&lt;1&gt; (D</span></div>
<div class="r" style="top:576px"><i></i><svg width="20" height="20"><use href="#prt"/></svg><span>5006_213_Rubber pac</span></div>
<div class="r" style="top:600px"><i></i><svg width="20" height="20"><use href="#prt"/></svg><span>5006_113_Exhaust uni</span></div>
<div class="r" style="top:624px"><i></i><svg width="20" height="20"><use href="#prt"/></svg><span>5006_113_Exhaust uni</span></div>
<div class="r" style="top:648px"><i></i><svg width="20" height="20"><use href="#fld"/></svg><span>COMMERCIAL</span></div>
<div class="r" style="top:672px"><i></i><svg width="20" height="20"><use href="#fld"/></svg><span>FASTERENS</span></div>
<div class="r" style="top:696px"><i></i><svg width="20" height="20"><use href="#prt"/></svg><span>5006_214_Flange&lt;1&gt;</span></div>
<div class="r" style="top:720px"><i></i><svg width="20" height="20"><use href="#prt"/></svg><span>5006_215_Bracket&lt;1&gt;</span></div>
</div>

<!-- Panel handle -->
<div class="abs" style="left:231px;top:416px;width:11px;height:48px;background:#fff;border:1px solid #8f8f8f;border-left:0;box-sizing:border-box"></div>
<div class="abs" style="left:232px;top:436px;width:7px;height:7px;border-radius:50%;background:#c8c8c8;border:1px solid #aaa;box-sizing:border-box"></div>

<!-- Toolbar -->
<svg class="abs" style="left:860px;top:0" width="440" height="34" viewBox="860 0 440 34">
<rect x="973" y="4" width="25" height="25" fill="#8f8f8f" stroke="#666"/>
<rect x="1105" y="4" width="27" height="25" fill="#bcbcbc" stroke="#aaa"/>
<rect x="1132" y="4" width="13" height="25" fill="#f2f2f2" stroke="#c8c8c8"/>
<!-- standard view -->
<path d="M873,20 L882,16 L892,20 L882,24Z" fill="#5a9fc0"/><path d="M881.500,8 v12" stroke="#333" stroke-width="2"/><path d="M878,11 l3.500,-4 3.500,4z" fill="#333"/>
<!-- zoom -->
<circle cx="911" cy="14" r="6.500" fill="#e8e8e8" stroke="#888" stroke-width="1.500"/><path d="M906,19 L900,25" stroke="#3a7ea0" stroke-width="3"/>
<path d="M911,10 v2 M911,16 v2 M907,14 h2 M913,14 h2" stroke="#666"/>
<circle cx="935" cy="14" r="6.500" fill="#f0f0f0" stroke="#888" stroke-width="1.500"/><path d="M930,19 L924,25" stroke="#3a7ea0" stroke-width="3"/><rect x="932" y="5" width="12" height="11" fill="none" stroke="#444" stroke-dasharray="2 2"/>
<!-- prev view -->
<path d="M952,18 L966,9 L970,13 L957,23Z" fill="#c4c4c4" stroke="#777"/><path d="M972,20 h-8 m3,-3 l-4,3 4,3" stroke="#3a7ea0" stroke-width="2" fill="none"/>
<!-- section -->
<path d="M978,10 h6 v16 h-6z M988,10 h6 v16 h-6z" fill="#3a7e9c" stroke="#163a4a"/><path d="M978,11 q8,-6 16,0 l0,3 q-8,-5 -16,0z" fill="#d8d8d8" stroke="#222" stroke-width=".7"/>
<!-- dynamic annotation -->
<path d="M1004,18 L1015,8 L1019,12 L1009,23Z" fill="#c8c8c8" stroke="#777"/><path d="M1008,10 l4,-3 M1007,15 l8,-7" stroke="#d03020" stroke-width="2"/><text x="1014" y="27" font-size="13" font-weight="700" fill="#3a7ea0" font-family="Liberation Serif">A</text>
<!-- view orientation -->
<path d="M1030,11 L1036,7 H1048 V20 L1042,24 H1030Z" fill="#fff" stroke="#555"/><path d="M1030,11 H1042 V24 H1030Z" fill="#7fc0df" stroke="#3c6e84"/><path d="M1042,11 L1048,7" stroke="#555"/>
<path d="M1054,15 h6 l-3,3z" fill="#999"/>
<!-- display style -->
<path d="M1071,10 L1077,6 L1086,9 V22 L1080,26 L1071,22Z" fill="#fff" stroke="#666"/><path d="M1071,10 L1080,13 V26 L1071,22Z" fill="#6fb4cf"/><path d="M1094,15 h6 l-3,3z" fill="#999"/>
<!-- hide show -->
<path d="M1110,16 q8,-9 17,0 q-8,9 -17,0z" fill="#fff" stroke="#222" stroke-width="1.500"/><circle cx="1118" cy="16" r="4" fill="#222"/><path d="M1118.500,7 V26" stroke="#111" stroke-width="1.500"/>
<path d="M1135,15 h6 l-3,3z" fill="#444"/>
<!-- edit appearance grey -->
<circle cx="1155" cy="14" r="8" fill="#e8e8e8"/><path d="M1160,20 l5,5" stroke="#ddd" stroke-width="3"/>
<!-- scene -->
<circle cx="1183" cy="14" r="8" fill="#d03020"/><path d="M1183,14 L1183,22 A8,8 0 0 1 1175,14Z" fill="#3a9c3a"/><path d="M1183,14 L1175,14 A8,8 0 0 1 1183,6Z" fill="#2a6fd0"/><path d="M1183,14 L1191,14 A8,8 0 0 1 1183,22Z" fill="#e8c020"/>
<rect x="1175" y="21" width="16" height="5" fill="#444"/><path d="M1177,23h2M1182,23h2M1187,23h2" stroke="#fff"/>
<path d="M1200,15 h6 l-3,3z" fill="#999"/>
<!-- monitor -->
<rect x="1216" y="9" width="16" height="12" fill="#e4e4e4" stroke="#666"/><path d="M1224,21 v3 M1219,25 h10" stroke="#444" stroke-width="2"/>
<path d="M1240,15 h6 l-3,3z" fill="#999"/>
<!-- cube -->
<path d="M1264,7 L1272,11 V21 L1264,25 L1256,21 V11Z" fill="#7fc0df" stroke="#3c7e99"/><path d="M1256,11 L1264,15 L1272,11 M1264,15 V25" stroke="#3c7e99" fill="none"/>
</svg>

<!-- window controls -->
<svg class="abs" style="left:1785px;top:5px" width="130" height="24" viewBox="1785 5 130 24" fill="none" stroke="#aaa" stroke-width="1.500">
<rect x="1791" y="11" width="11" height="13"/><path d="M1796,14 l-3,3.500 3,3.500z" fill="#999"/>
<rect x="1817" y="11" width="11" height="13"/><path d="M1823,14 l3,3.500 -3,3.500z" fill="#999"/>
<path d="M1843,22 h10" stroke-width="2.500"/>
<rect x="1868" y="16" width="10" height="8"/><path d="M1872,16 v-5 h10 v8 h-4"/>
<path d="M1896,13 l9,9 m0,-9 l-9,9"/>
</svg>

<!-- task pane -->
<div class="abs" style="left:1887px;top:85px;width:32px;height:180px;background:#d2d2d2;border:1px solid #8c8c8c;border-right:0;box-sizing:border-box"></div>
<div class="abs" style="left:1888px;top:86px;width:31px;height:28px;background:#fff"></div>
<div class="abs" style="left:1888px;top:114px;width:31px;height:1px;background:#8c8c8c"></div>
<div class="abs" style="left:1888px;top:144px;width:31px;height:1px;background:#8c8c8c"></div>
<div class="abs" style="left:1888px;top:174px;width:31px;height:1px;background:#8c8c8c"></div>
<div class="abs" style="left:1888px;top:204px;width:31px;height:1px;background:#8c8c8c"></div>
<div class="abs" style="left:1888px;top:234px;width:31px;height:1px;background:#8c8c8c"></div>
<svg class="abs" style="left:1890px;top:88px" width="26" height="24" viewBox="0 0 26 24"><path d="M2,13 L13,2 L24,13" fill="none" stroke="#2a6e8c" stroke-width="2.500"/><path d="M6,12 V22 H20 V12" fill="#fff" stroke="#333"/><rect x="11" y="14" width="6" height="8" fill="#fff" stroke="#333"/></svg>
<svg class="abs" style="left:1892px;top:119px" width="24" height="24" viewBox="0 0 24 24" fill="#f4f4f4" stroke="#333"><path d="M4,7 L10,4 V22 H4Z M10,6 L15,2 V21 L10,22Z M15,4 L19,5 Q21,12 19,21 H15Z"/></svg>
<svg class="abs" style="left:1891px;top:149px" width="26" height="22" viewBox="0 0 26 22" fill="#e8e8e8" stroke="#333"><path d="M2,4 H9 L11,6 H19 V9 H7 L2,20Z" fill="#d0d0d0"/><path d="M7,9 H24 L20,20 H2Z"/></svg>
<svg class="abs" style="left:1892px;top:179px" width="24" height="22" viewBox="0 0 24 22"><rect x="1" y="1" width="21" height="20" fill="#f4f4f4" stroke="#333"/><path d="M3,4h10v3H3z M7,10h4v6H3v3h12v-3h-4" fill="#f0c420" stroke="#604800"/><rect x="15" y="3" width="5" height="3" fill="#f0c420"/><rect x="15" y="9" width="5" height="10" fill="#aaa" stroke="#444"/></svg>
<svg class="abs" style="left:1895px;top:209px" width="18" height="20" viewBox="0 0 18 20"><circle cx="9" cy="10" r="8.500" fill="#d03020"/><path d="M9,10 L9,18.500 A8.500,8.500 0 0 1 .5,10Z" fill="#3a9c3a"/><path d="M9,10 L.5,10 A8.500,8.500 0 0 1 9,1.500Z" fill="#2a6fd0"/><path d="M9,10 L17.500,10 A8.500,8.500 0 0 1 9,18.500Z" fill="#e8c020"/></svg>
<svg class="abs" style="left:1893px;top:240px" width="22" height="20" viewBox="0 0 22 20"><rect x="2" y="1" width="18" height="18" fill="#fff" stroke="#333"/><rect x="2" y="1" width="18" height="4" fill="#3a7ea0"/><path d="M4,8h5v2H4zM4,12h5v2H4zM4,16h5v1H4z" fill="#3a7ea0"/><path d="M11,9h7M11,13h7M11,16.500h7" stroke="#333"/></svg>

</body></html>
